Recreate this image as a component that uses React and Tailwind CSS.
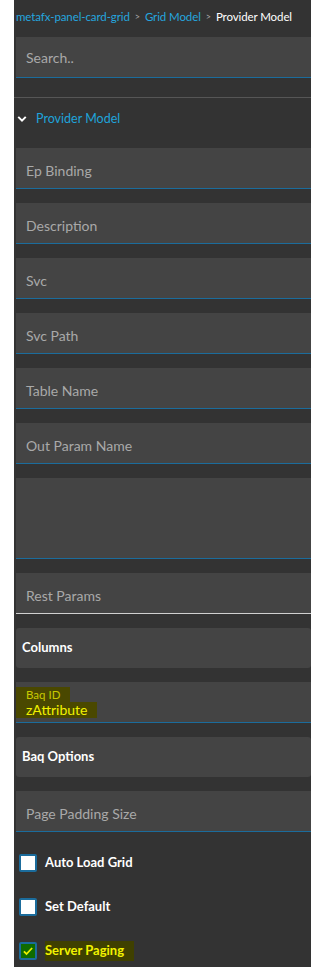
import React from "react";

const font = { fontFamily: "Lato, 'Open Sans', sans-serif" };

function Field({ label, line = "border-[#1b6c9c]" }) {
  return (
    <div className={"h-[41px] bg-[#444444] border-b flex items-center pl-[10px] pt-[4px] text-[14px] text-[#a9a9a9] " + line}>
      {label}
    </div>
  );
}

function Group({ label }) {
  return (
    <div className="h-[40px] bg-[#444444] rounded-[3px] flex items-center pl-[6px] text-[13px] font-bold text-white">
      {label}
    </div>
  );
}

function Check({ label, checked, marked }) {
  return (
    <div className="h-[44px] flex items-center pl-[3px]">
      <div
        className={
          checked
            ? "w-[18px] h-[18px] rounded-[2px] bg-[#0f6b00] border-2 border-[#1b6c9c] flex items-center justify-center"
            : "w-[18px] h-[18px] rounded-[2px] bg-white border-2 border-[#1b6c9c]"
        }
      >
        {checked && (
          <svg viewBox="0 0 16 16" className="w-[12px] h-[12px]">
            <path d="M2.5 8.5 L6 12 L13.5 4" fill="none" stroke="#e8f000" strokeWidth="2.4" />
          </svg>
        )}
      </div>
      <span
        className={
          marked
            ? "ml-[8px] text-[13px] font-bold text-[#f2f200] bg-[#3f4000] pr-[10px]"
            : "ml-[8px] text-[13px] font-bold text-white"
        }
      >
        {label}
      </span>
    </div>
  );
}

export default function App() {
  return (
    <div className="flex w-full min-h-screen bg-white" style={font}>
      <div className="w-[14px] shrink-0 bg-white" />
      <div className="flex-1 bg-[#333333] pb-[6px]">
        {/* Breadcrumb */}
        <div className="h-[34px] flex items-center pl-[2px] text-[11.5px] tracking-[-0.1px] whitespace-nowrap">
          <span className="text-[#25a6df]">metafx-panel-card-grid</span>
          <span className="text-[#aaaaaa] mx-[5px] text-[9px]">&gt;</span>
          <span className="text-[#25a6df]">Grid Model</span>
          <span className="text-[#aaaaaa] mx-[5px] text-[9px]">&gt;</span>
          <span className="text-white">Provider Model</span>
        </div>

        <div className="mt-[3px] ml-[2px] h-[41px] bg-[#444444] border-b border-[#1b6c9c] flex items-center pl-[10px] text-[14px] text-[#a9a9a9]">
          Search..
        </div>

        <div className="mt-[19px] h-px bg-[#565656]" />

        {/* Section header */}
        <div className="h-[42px] flex items-center pl-[3px]">
          <svg viewBox="0 0 12 12" className="w-[10px] h-[10px]">
            <path d="M1.5 3.5 L6 8 L10.5 3.5" fill="none" stroke="#ffffff" strokeWidth="2.4" />
          </svg>
          <span className="ml-[9px] text-[12.5px] text-[#1fa3da]">Provider Model</span>
        </div>

        <div className="ml-[2px] mt-[8px] flex flex-col gap-[14px]">
          <Field label="Ep Binding" />
          <Field label="Description" />
          <Field label="Svc" />
          <Field label="Svc Path" />
          <Field label="Table Name" />
          <Field label="Out Param Name" />
          <div className="h-[81px] bg-[#444444] border-b border-[#1b6c9c]" />
          <Field label="Rest Params" line="border-[#d0d0d0]" />
          <Group label="Columns" />
          <div className="h-[41px] bg-[#444444] border-b border-[#1b6c9c] flex flex-col justify-center">
            <span className="self-start bg-[#4a4800] pl-[10px] pr-[10px] text-[11.5px] leading-[15px] text-[#c8c800]">
              Baq ID
            </span>
            <span className="self-start bg-[#4a4800] pl-[10px] pr-[10px] text-[14px] leading-[16px] text-[#f2f200]">
              zAttribute
            </span>
          </div>
          <Group label="Baq Options" />
          <Field label="Page Padding Size" />
        </div>

        <div className="ml-[2px] mt-[9px] flex flex-col">
          <Check label="Auto Load Grid" />
          <Check label="Set Default" />
          <Check label="Server Paging" checked marked />
        </div>
      </div>
    </div>
  );
}
